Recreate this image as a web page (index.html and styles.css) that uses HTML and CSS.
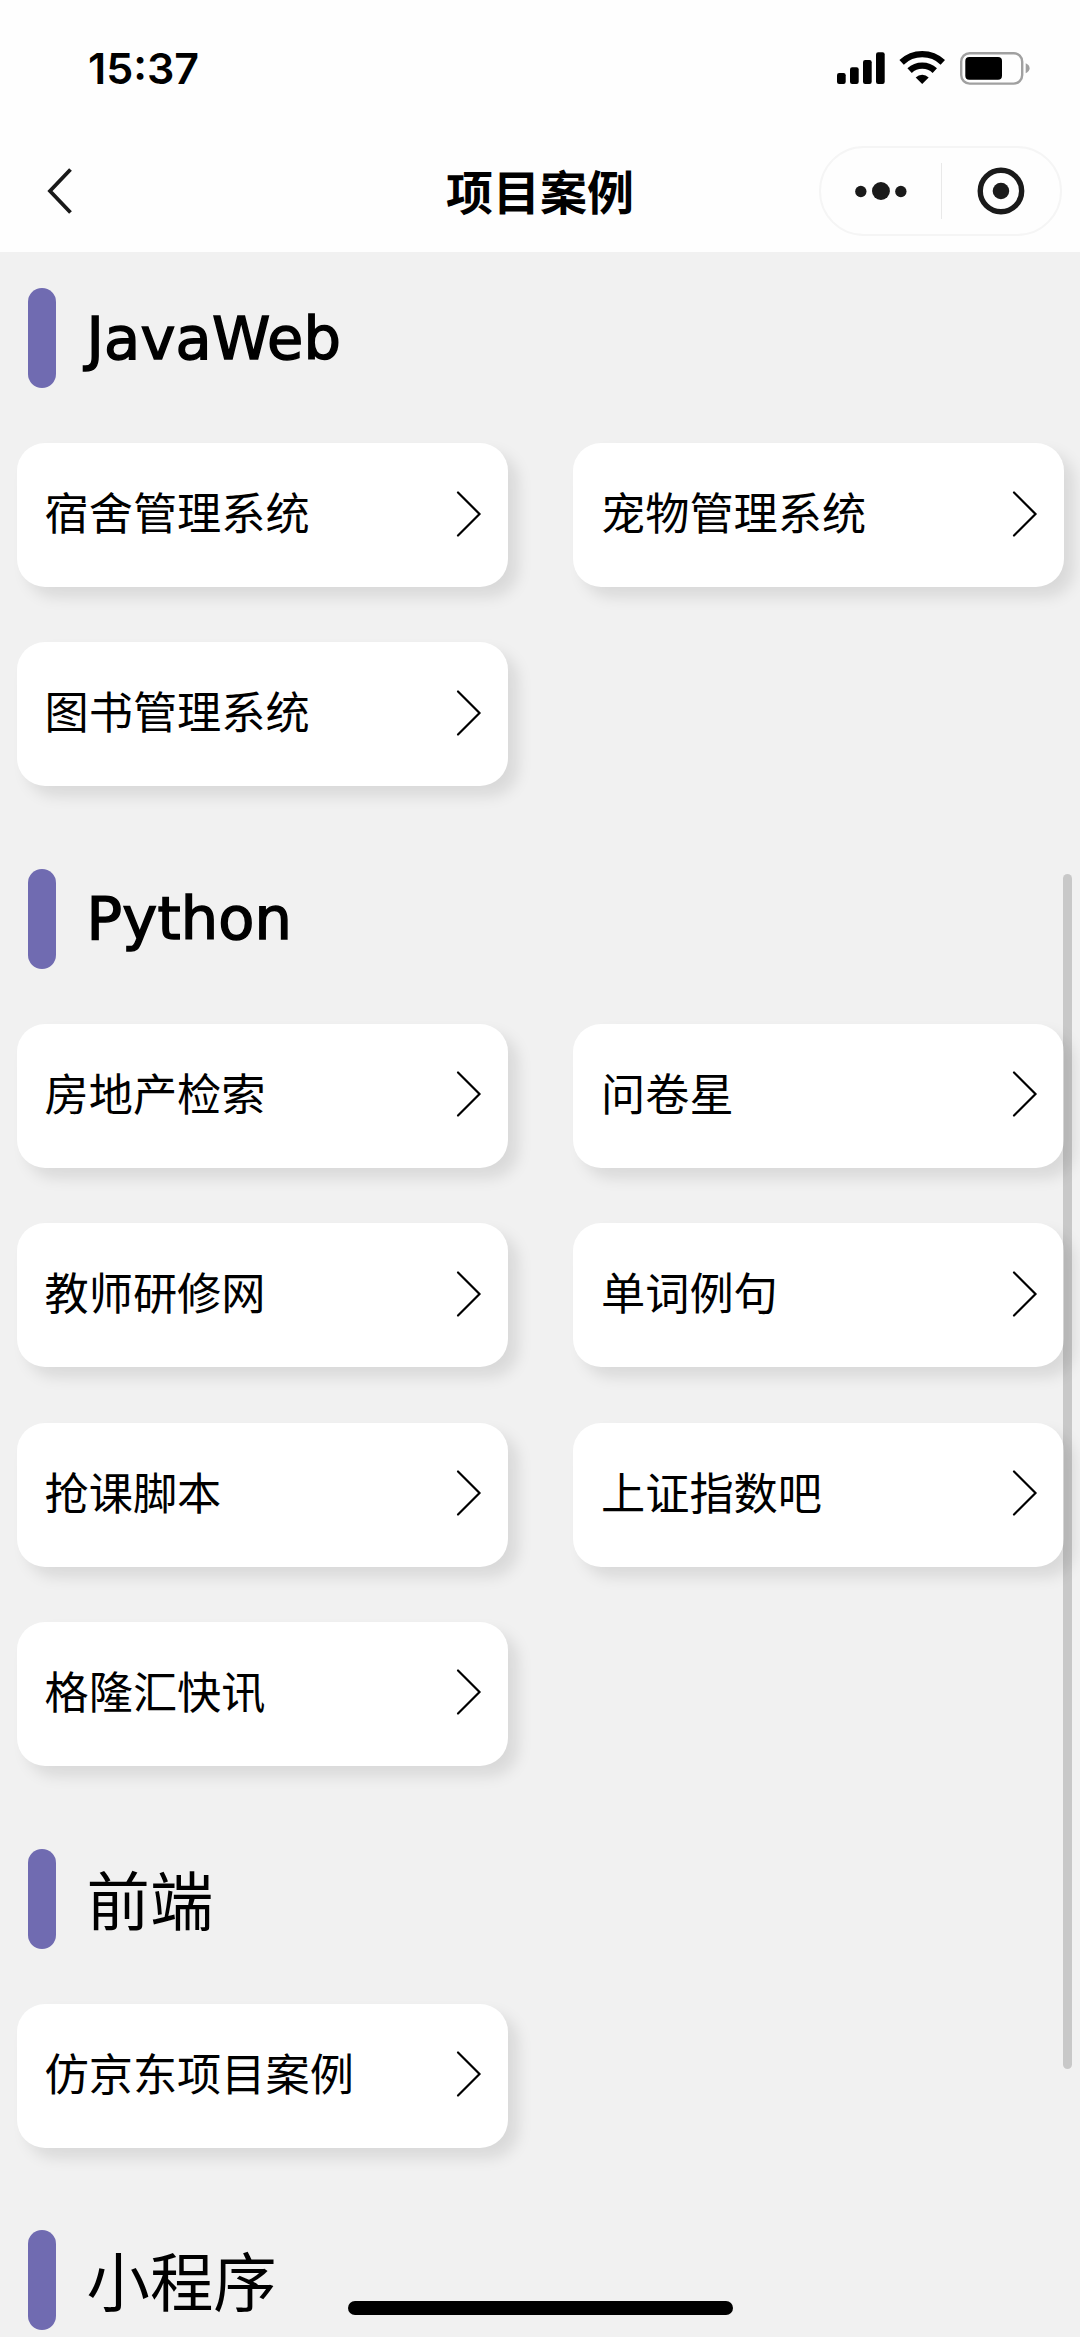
FILE: index.html
```
<!DOCTYPE html>
<html lang="zh-CN">
<head>
    <meta charset="UTF-8">
    <meta name="viewport" content="width=device-width, initial-scale=1.0">
    <title>项目案例</title>
    <link rel="stylesheet" href="styles.css">
</head>
<body>
    <!-- 箭头图标 -->
    <svg class="symbols">
        <symbol id="arrow" viewBox="0 0 26 48">
            <path d="M2 2.5 L23.5 24 L2 45.5" fill="none" stroke="#000" stroke-width="2.2" stroke-linecap="round"/>
        </symbol>
    </svg>

    <header class="header">
        <div class="status-bar">
            <span class="time">15:37</span>
            <svg class="status-icons" width="194" height="36" viewBox="0 0 194 36">
                <rect x="1" y="23" width="8.7" height="11" rx="2.2"/>
                <rect x="14" y="17.3" width="8.7" height="16.7" rx="2.2"/>
                <rect x="27" y="10" width="8.7" height="24" rx="2.2"/>
                <rect x="40" y="2.3" width="8.7" height="31.7" rx="2.2"/>
                <g fill="none" stroke="#000" stroke-width="6.4">
                    <path d="M65.6 12.3 A30 30 0 0 1 106.8 12.3"/>
                    <path d="M73.6 20.6 A18.5 18.5 0 0 1 98.8 20.6"/>
                </g>
                <path d="M79.7 27.4 A9.5 9.5 0 0 1 92.7 27.4 L86.2 34 Z"/>
                <rect x="125.2" y="3.2" width="61" height="30.4" rx="8.5" fill="none" stroke="#a0a0a0" stroke-width="2.4"/>
                <rect x="129.3" y="7" width="36.7" height="22.7" rx="4"/>
                <path d="M189.7 13.3 Q193.6 15 193.6 18.2 Q193.6 21.4 189.7 23.2 Z" fill="#a0a0a0"/>
            </svg>
        </div>
        <div class="nav-bar">
            <svg class="back" width="30" height="50" viewBox="0 0 30 50">
                <path d="M24.5 3.5 L4 25 L24.5 46.5" fill="none" stroke="#191919" stroke-width="3.8"/>
            </svg>
            <h1 class="title">项目案例</h1>
            <div class="capsule">
                <svg class="more" width="120" height="86" viewBox="0 0 120 86">
                    <circle cx="40" cy="43.5" r="5.7"/>
                    <circle cx="60.2" cy="43" r="9"/>
                    <circle cx="80.2" cy="43.5" r="5.7"/>
                </svg>
                <span class="line"></span>
                <svg class="close" width="118" height="86" viewBox="0 0 118 86">
                    <circle cx="59.2" cy="43" r="20.8" fill="none" stroke="#1a1a1a" stroke-width="5.4"/>
                    <circle cx="59.2" cy="43" r="8.3"/>
                </svg>
            </div>
        </div>
    </header>

    <main class="content">
        <section class="group">
            <h2 class="group-title">JavaWeb</h2>
            <div class="list">
                <a class="item">宿舍管理系统<svg class="arrow"><use href="#arrow"/></svg></a>
                <a class="item">宠物管理系统<svg class="arrow"><use href="#arrow"/></svg></a>
                <a class="item">图书管理系统<svg class="arrow"><use href="#arrow"/></svg></a>
            </div>
        </section>

        <section class="group">
            <h2 class="group-title">Python</h2>
            <div class="list">
                <a class="item">房地产检索<svg class="arrow"><use href="#arrow"/></svg></a>
                <a class="item">问卷星<svg class="arrow"><use href="#arrow"/></svg></a>
                <a class="item">教师研修网<svg class="arrow"><use href="#arrow"/></svg></a>
                <a class="item">单词例句<svg class="arrow"><use href="#arrow"/></svg></a>
                <a class="item">抢课脚本<svg class="arrow"><use href="#arrow"/></svg></a>
                <a class="item">上证指数吧<svg class="arrow"><use href="#arrow"/></svg></a>
                <a class="item">格隆汇快讯<svg class="arrow"><use href="#arrow"/></svg></a>
            </div>
        </section>

        <section class="group">
            <h2 class="group-title cn">前端</h2>
            <div class="list">
                <a class="item">仿京东项目案例<svg class="arrow"><use href="#arrow"/></svg></a>
            </div>
        </section>

        <section class="group">
            <h2 class="group-title cn">小程序</h2>
        </section>
    </main>

    <div class="scrollbar"></div>
    <div class="home-indicator"></div>
</body>
</html>
```

FILE: styles.css
```
* {
    box-sizing: border-box;
}
body {
    margin: 0;
    height: 2337px;
    overflow: hidden;
    position: relative;
    background-color: #f1f1f1;
    color: #000;
    font-family: "Noto Sans CJK SC", sans-serif;
}
.symbols {
    display: none;
}

/* 顶部 */
.header {
    height: 252px;
    background-color: #fefefe;
}
.status-bar {
    display: flex;
    justify-content: space-between;
    align-items: center;
    height: 136px;
    padding: 0 50px 0 88px;
}
.time {
    font-family: Inter, sans-serif;
    font-size: 43px;
    font-weight: 600;
}
.nav-bar {
    display: grid;
    grid-template-columns: 1fr auto 1fr;
    align-items: center;
    height: 110px;
    padding: 0 18px 0 46px;
}
.title {
    margin: 0;
    padding: 0 28px 3px 0;
    font-size: 47px;
    font-weight: 700;
    line-height: 70px;
}
.capsule {
    display: flex;
    justify-self: end;
    align-items: center;
    width: 243px;
    height: 90px;
    border: 2px solid #f5f5f5;
    border-radius: 45px;
    fill: #1a1a1a;
}
.line {
    width: 2px;
    height: 56px;
    background-color: #e9e9e9;
}

/* 分组 */
.content {
    padding: 36px 0 0 16.5px;
}
.group {
    margin-bottom: 82.7px;
}
.group-title {
    display: flex;
    align-items: center;
    height: 100px;
    margin: 0 0 55px 11px;
    font-family: "DejaVu Sans", sans-serif;
    font-size: 59px;
    font-weight: 400;
    letter-spacing: 0.2px;
    -webkit-text-stroke: 1.5px #000;
}
.group-title::before {
    content: "";
    align-self: flex-start;
    width: 28px;
    height: 100px;
    margin-right: 31px;
    border-radius: 14px;
    background-color: #706bb1;
}
.group-title.cn {
    padding-bottom: 4px;
    font-family: "Noto Sans CJK SC", sans-serif;
    font-size: 63.4px;
    letter-spacing: 0;
    -webkit-text-stroke: 0;
}
.list {
    display: grid;
    grid-template-columns: 491px 491px;
    gap: 55.3px 65.5px;
}
.item {
    display: flex;
    justify-content: space-between;
    align-items: center;
    height: 144px;
    padding: 0 26px 8px 28px;
    border-radius: 28px;
    background-color: #fff;
    box-shadow: 10px 10px 15px rgba(0, 0, 0, 0.1);
    font-size: 44.2px;
    line-height: 64px;
}
.arrow {
    width: 26px;
    height: 48px;
    margin-top: 5px;
}

.scrollbar {
    position: absolute;
    top: 874px;
    right: 8px;
    width: 9px;
    height: 1195px;
    border-radius: 5px;
    background-color: rgba(0, 0, 0, 0.17);
}
.home-indicator {
    position: absolute;
    left: 348px;
    bottom: 22px;
    width: 385px;
    height: 14px;
    border-radius: 7px;
    background-color: #000;
}
```
